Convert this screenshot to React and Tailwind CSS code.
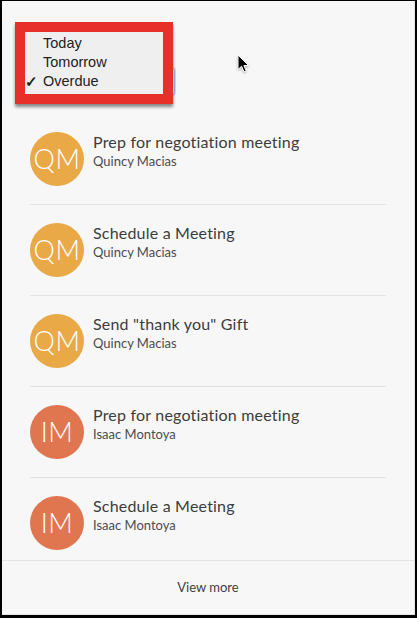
import React from "react";

const tasks = [
  { title: "Prep for negotiation meeting", name: "Quincy Macias", initials: "QM", color: "bg-[#e9a946]" },
  { title: "Schedule a Meeting", name: "Quincy Macias", initials: "QM", color: "bg-[#e9a946]" },
  { title: 'Send "thank you" Gift', name: "Quincy Macias", initials: "QM", color: "bg-[#e9a946]" },
  { title: "Prep for negotiation meeting", name: "Isaac Montoya", initials: "IM", color: "bg-[#e07650]" },
  { title: "Schedule a Meeting", name: "Isaac Montoya", initials: "IM", color: "bg-[#e07650]" },
];

function Cursor() {
  return (
    <svg width="14" height="20" viewBox="0 0 14 20" className="absolute left-[235px] top-[53px] drop-shadow-[0_1px_1px_rgba(0,0,0,0.3)]">
      <path d="M1 1 L1 15.5 L4.6 12.3 L7 17.8 L9.2 16.8 L6.9 11.5 L11.6 11.5 Z" fill="#000" stroke="#fff" strokeWidth="1" strokeLinejoin="round" />
    </svg>
  );
}

function DueMenu() {
  const options = ["Today", "Tomorrow", "Overdue"];
  return (
    <div className="absolute left-[13px] top-[21px] w-[158px] h-[82px] border-[10px] border-[#e8302a] bg-[#efefef] shadow-[0_3px_3px_rgba(0,0,0,0.45)]">
      <ul className="pt-[2px] font-['Liberation_Sans',sans-serif] text-[14.5px] leading-[19px] text-[#222]">
        {options.map((opt) => (
          <li key={opt} className="flex items-center">
            <span className="w-[18px] text-[15px] font-bold leading-[19px]">{opt === "Overdue" ? "✓" : ""}</span>
            <span>{opt}</span>
          </li>
        ))}
      </ul>
    </div>
  );
}

function TaskRow({ task, last }) {
  return (
    <li className={`flex items-start gap-[9px] ${last ? "pt-[18px] pb-[10px]" : "py-[18px] border-b border-[#e3e3e3]"}`}>
      <div className={`flex h-[54px] w-[54px] shrink-0 items-center justify-center rounded-full ${task.color}`}>
        <span className="text-[27px] font-light tracking-[0.5px] text-white">{task.initials}</span>
      </div>
      <div className="-mt-[1px] flex flex-col">
        <span className="text-[16px] leading-[21px] tracking-[0.2px] text-[#3b3d40]">{task.title}</span>
        <span className="text-[13px] leading-[18px] text-[#4a4c4f]">{task.name}</span>
      </div>
    </li>
  );
}

export default function App() {
  return (
    <div className="h-[618px] w-[417px] bg-black pl-[2px] pt-[1px] pr-[2px] pb-[3px] font-['Lato',sans-serif]">
      <div className="relative flex h-full flex-col border-r border-b border-[#e4e4e4] bg-[#f7f7f7]">
        <div className="relative h-[113px] shrink-0">
          <div className="absolute left-[30px] top-[66px] h-[29px] w-[143px] rounded-[4px] border border-[#8fb8f0] shadow-[0_0_0_1px_rgba(120,170,240,0.4)] bg-white" />
          <DueMenu />
          <Cursor />
        </div>
        <ul className="mx-[28px] flex flex-col">
          {tasks.map((t, i) => (
            <TaskRow key={i} task={t} last={i === tasks.length - 1} />
          ))}
        </ul>
        <div className="flex flex-1 items-center justify-center border-t border-[#e3e3e3]">
          <button type="button" className="text-[13px] text-[#3f4144]">View more</button>
        </div>
      </div>
    </div>
  );
}
